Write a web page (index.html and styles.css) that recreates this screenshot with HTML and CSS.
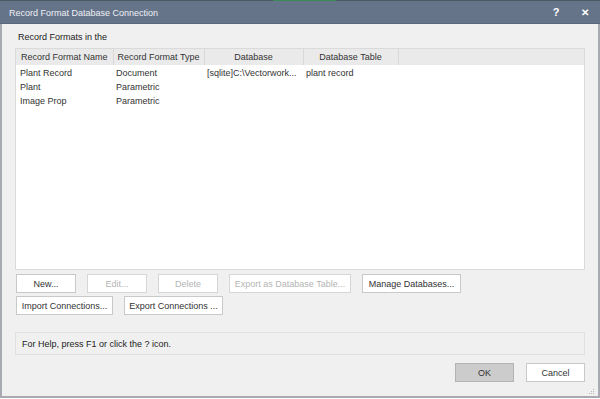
FILE: index.html
```html
<!DOCTYPE html>
<html lang="en">
<head>
    <meta charset="UTF-8">
    <title>Record Format Database Connection</title>
    <link rel="stylesheet" href="styles.css">
</head>
<body>
    <div class="window">
        <div class="top-strip">
            <div class="strip-gap"></div>
            <div class="strip-green"></div>
        </div>
        <div class="titlebar">
            <span class="title">Record Format Database Connection</span>
            <span class="title-btn help">?</span>
            <span class="title-btn close">&#x2715;</span>
        </div>

        <div class="content">
            <div class="group-label">Record Formats in the</div>

            <div class="listbox">
                <table class="grid">
                    <thead>
                        <tr>
                            <th class="c1">Record Format Name</th>
                            <th class="c2">Record Format Type</th>
                            <th class="c3">Database</th>
                            <th class="c4">Database Table</th>
                            <th class="c5"></th>
                        </tr>
                    </thead>
                    <tbody>
                        <tr>
                            <td class="first">Plant Record</td>
                            <td>Document</td>
                            <td>[sqlite]C:\Vectorwork...</td>
                            <td>plant record</td>
                            <td></td>
                        </tr>
                        <tr>
                            <td class="first">Plant</td>
                            <td>Parametric</td>
                            <td></td>
                            <td></td>
                            <td></td>
                        </tr>
                        <tr>
                            <td class="first">Image Prop</td>
                            <td>Parametric</td>
                            <td></td>
                            <td></td>
                            <td></td>
                        </tr>
                    </tbody>
                </table>
            </div>

            <div class="btn-row first">
                <button class="btn w60">New...</button>
                <button class="btn w60" disabled>Edit...</button>
                <button class="btn w60" disabled>Delete</button>
                <button class="btn w122" disabled>Export as Database Table...</button>
                <button class="btn w99">Manage Databases...</button>
            </div>
            <div class="btn-row second">
                <button class="btn w97">Import Connections...</button>
                <button class="btn w99">Export Connections ...</button>
            </div>

            <div class="help-box">For Help, press F1 or click the ? icon.</div>

            <div class="footer">
                <button class="btn ok">OK</button>
                <button class="btn cancel">Cancel</button>
            </div>
            <div class="grip">
                <svg width="7" height="7" viewBox="0 0 7 7">
                    <rect x="5" y="1" width="1" height="1" fill="#b5b5b5"/>
                    <rect x="3" y="3" width="1" height="1" fill="#b5b5b5"/>
                    <rect x="5" y="3" width="1" height="1" fill="#b5b5b5"/>
                    <rect x="1" y="5" width="1" height="1" fill="#b5b5b5"/>
                    <rect x="3" y="5" width="1" height="1" fill="#b5b5b5"/>
                    <rect x="5" y="5" width="1" height="1" fill="#b5b5b5"/>
                </svg>
            </div>
        </div>
    </div>
</body>
</html>
```

FILE: styles.css
```css
* {
    box-sizing: border-box;
}

body {
    margin: 0;
    width: 600px;
    height: 399px;
    background-color: #ffffff;
    font-family: "Liberation Sans", Arial, sans-serif;
    font-size: 9px;
    color: #222;
}

.window {
    width: 600px;
    height: 398px;
    display: flex;
    flex-direction: column;
    background-color: #f0f0f0;
    border-left: 2px solid #a7abb1;
    border-right: 2px solid #a7abb1;
    border-bottom: 2px solid #a7abb1;
}

/* thin strip above the title bar */
.top-strip {
    height: 1px;
    display: flex;
    background-color: #4d5866;
    margin: 0 -2px;
}

.strip-gap {
    width: 273px;
}

.strip-green {
    width: 63px;
    background-color: #3c8a56;
}

.titlebar {
    height: 23px;
    margin: 0 -2px;
    background-color: #66748a;
    color: #eef1f5;
    display: flex;
    align-items: center;
    padding-left: 9px;
    border-bottom: 1px solid #5b687c;
}

.title {
    flex: 1;
    font-size: 9px;
    padding-top: 1px;
}

.title-btn {
    font-weight: bold;
    color: #ffffff;
    text-align: center;
}

.help {
    width: 14px;
    font-size: 11px;
    margin-right: 16px;
}

.close {
    width: 12px;
    font-size: 10px;
    margin-right: 9px;
}

.content {
    flex: 1;
    display: flex;
    flex-direction: column;
    padding: 7px 13px 0 13px;
    position: relative;
}

.group-label {
    padding-left: 3px;
    height: 17px;
    line-height: 12px;
}

.listbox {
    height: 222px;
    background-color: #ffffff;
    border: 1px solid #dadada;
}

.grid {
    width: 100%;
    border-collapse: collapse;
    table-layout: fixed;
}

.grid th {
    height: 16px;
    padding: 0;
    font-weight: normal;
    background-color: #eaeaea;
    border-right: 1px solid #d8d8d8;
    text-align: center;
    white-space: nowrap;
    color: #333;
}

.grid th.c5 {
    border-right: none;
}

.c1 { width: 97px; }
.c2 { width: 91px; }
.c3 { width: 99px; }
.c4 { width: 95px; }

.grid td {
    height: 14px;
    line-height: 14px;
    padding: 0 0 0 3px;
    white-space: nowrap;
    overflow: hidden;
    color: #333;
}

.grid td.first {
    padding-left: 4px;
}

.grid tbody tr:first-child td {
    padding-top: 1px;
}

.btn {
    height: 19px;
    font-family: inherit;
    font-size: 9px;
    color: #333;
    background-color: #ffffff;
    border: 1px solid #c9c9c9;
    padding: 0;
    border-radius: 0;
    white-space: nowrap;
}

.btn:disabled {
    color: #b4b4b4;
    border-color: #d6d6d6;
}

.w60 { width: 60px; }
.w97 { width: 97px; }
.w99 { width: 99px; }
.w122 { width: 122px; }

.btn-row {
    display: flex;
    gap: 11px;
    padding-left: 1px;
}

.btn-row.first {
    margin-top: 4px;
}

.btn-row.second {
    margin-top: 3px;
}

.help-box {
    margin-top: 17px;
    height: 23px;
    display: flex;
    align-items: center;
    padding-left: 6px;
    border: 1px solid #e0e0e0;
    background-color: #f0f0f0;
}

.footer {
    margin-top: 8px;
    display: flex;
    justify-content: flex-end;
    gap: 12px;
}

.ok {
    width: 59px;
    background-color: #cccccc;
    border-color: #b3b3b3;
}

.cancel {
    width: 59px;
}

.grip {
    position: absolute;
    right: 3px;
    bottom: 1px;
    line-height: 0;
}
```
